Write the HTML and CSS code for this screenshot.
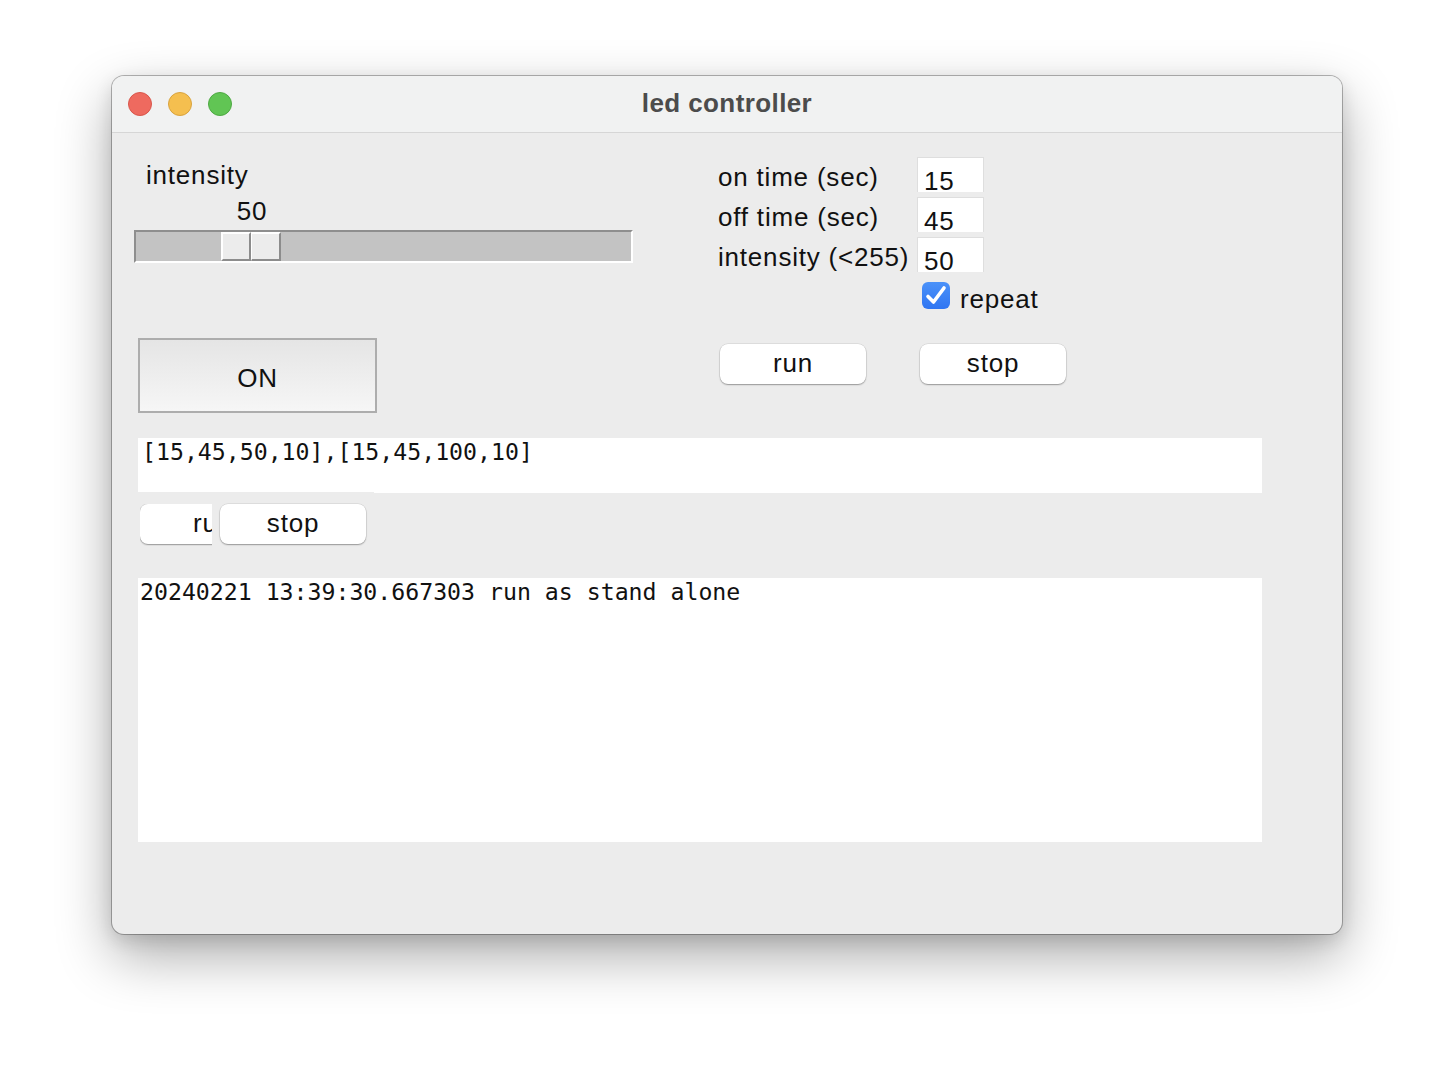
FILE: index.html
```html
<!DOCTYPE html>
<html>
<head>
<meta charset="utf-8">
<title>led controller</title>
<link rel="stylesheet" href="styles.css">
</head>
<body>
<div class="page">
  <div class="window">
    <div class="titlebar">
      <div class="lights">
        <span class="light red"></span>
        <span class="light yellow"></span>
        <span class="light green"></span>
      </div>
      <div class="title">led controller</div>
    </div>
    <div class="content">
      <div class="top">
        <div class="left">
          <div class="lbl-intensity">intensity</div>
          <div class="slider-val">50</div>
          <div class="slider">
            <div class="thumb">
              <span class="thumb-seg"></span>
              <span class="thumb-seg"></span>
            </div>
          </div>
          <div class="on-btn">ON</div>
        </div>
        <div class="right">
          <div class="form">
            <div class="flabel">on time (sec)</div>
            <div class="finput">15</div>
            <div class="flabel">off time (sec)</div>
            <div class="finput">45</div>
            <div class="flabel">intensity (&lt;255)</div>
            <div class="finput">50</div>
          </div>
          <div class="check-row">
            <span class="checkbox">
              <svg width="28" height="27" viewBox="0 0 28 27"><path d="M6 14.5 L11.5 20 L22 6" fill="none" stroke="#fff" stroke-width="3.6" stroke-linecap="round" stroke-linejoin="round"/></svg>
            </span>
            <span class="check-label">repeat</span>
          </div>
          <div class="btn-row">
            <div class="mac-btn first">run</div>
            <div class="mac-btn second">stop</div>
          </div>
        </div>
      </div>
      <div class="entry">[15,45,50,10],[15,45,100,10]</div>
      <div class="btn-row2">
        <div class="clip"><div class="mac-btn">run</div></div>
        <div class="mac-btn stop2">stop</div>
      </div>
      <div class="log">20240221 13:39:30.667303 run as stand alone</div>
    </div>
  </div>
</div>
</body>
</html>
```

FILE: styles.css
```css
* { box-sizing: border-box; }
html, body { margin: 0; padding: 0; background: #ffffff; }
body {
  font-family: "Liberation Sans", Arial, sans-serif;
  color: #111;
}
.page {
  padding: 76px 0 0 112px;
  height: 1082px;
}
.window {
  width: 1230px;
  height: 858px;
  border-radius: 12px;
  background: #ececec;
  overflow: hidden;
  box-shadow: 0 0 0 1px rgba(0,0,0,0.28), 0 22px 55px rgba(0,0,0,0.33), 0 6px 18px rgba(0,0,0,0.12);
}
.titlebar {
  height: 57px;
  background: #f1f2f2;
  border-bottom: 1px solid #d6d6d6;
  display: flex;
  align-items: center;
  position: relative;
}
.lights {
  display: flex;
  gap: 16px;
  padding-left: 16px;
}
.light {
  width: 24px;
  height: 24px;
  border-radius: 50%;
  display: block;
}
.red { background: #ee6a5f; border: 1px solid #d9564b; }
.yellow { background: #f5bf4f; border: 1px solid #d9a33e; }
.green { background: #61c554; border: 1px solid #4ea943; }
.title {
  position: absolute;
  left: 0; right: 0; top: 0;
  height: 56px;
  line-height: 55px;
  text-align: center;
  font-weight: bold;
  font-size: 26px;
  color: #4c4c4c;
  letter-spacing: 0.4px;
}
.content {
  font-size: 26px;
  letter-spacing: 0.8px;
}
.top {
  display: flex;
  height: 280px;
}
.left { width: 606px; }
.lbl-intensity {
  margin: 28px 0 0 34px;
  height: 28px;
  line-height: 28px;
}
.slider-val {
  margin: 8px 0 0 110px;
  width: 60px;
  height: 28px;
  line-height: 28px;
  text-align: center;
}
.slider {
  margin: 5px 0 0 22px;
  width: 499px;
  height: 33px;
  background: #c3c3c3;
  border-top: 2px solid #8e8e8e;
  border-left: 2px solid #8e8e8e;
  border-bottom: 2px solid #ffffff;
  border-right: 2px solid #ffffff;
}
.thumb {
  margin-left: 85px;
  display: flex;
  height: 29px;
}
.thumb-seg {
  width: 30px;
  height: 29px;
  background: #ececec;
  border-top: 2px solid #ffffff;
  border-left: 2px solid #ffffff;
  border-bottom: 2px solid #8c8c8c;
  border-right: 2px solid #8c8c8c;
  display: block;
}
.thumb-seg + .thumb-seg { border-left-width: 1px; }
.on-btn {
  margin: 75px 0 0 26px;
  width: 239px;
  height: 75px;
  border: 2px solid #adadad;
  background: linear-gradient(#e5e5e5, #f6f6f6);
  text-align: center;
  line-height: 71px;
  padding-top: 3px;
}
.right { flex: 1; }
.form {
  margin-top: 24px;
  display: grid;
  grid-template-columns: 199px 67px;
  grid-auto-rows: 35px;
  row-gap: 5px;
}
.flabel {
  line-height: 28px;
  padding-top: 6px;
  white-space: nowrap;
}
.finput {
  background: #ffffff;
  border: 1px solid #dedede;
  border-bottom: none;
  line-height: 20px;
  padding: 13px 0 0 6px;
}
.check-row {
  margin: 10px 0 0 204px;
  display: flex;
  align-items: flex-start;
  height: 27px;
}
.checkbox {
  width: 28px;
  height: 27px;
  border-radius: 6px;
  background: linear-gradient(#4b92f9, #2f75f2);
  display: block;
}
.checkbox svg { display: block; }
.check-label {
  margin-left: 10px;
  line-height: 28px;
  margin-top: 3px;
}
.btn-row {
  margin: 35px 0 0 2px;
  display: flex;
  gap: 54px;
}
.mac-btn {
  width: 146px;
  height: 40px;
  background: #ffffff;
  border-radius: 8px;
  box-shadow: 0 1px 1.5px rgba(0,0,0,0.32), 0 0 0 0.5px rgba(0,0,0,0.12);
  text-align: center;
  line-height: 38px;
}
.entry {
  margin: 25px 0 0 26px;
  width: 1124px;
  height: 55px;
  background: #ffffff;
  font-family: "DejaVu Sans Mono", "Liberation Mono", monospace;
  font-size: 23.2px;
  letter-spacing: 0;
  padding: 0 0 0 4px;
  position: relative;
}
.entry::after {
  content: "";
  position: absolute;
  left: 0;
  bottom: 0;
  width: 236px;
  height: 1.5px;
  background: #ececec;
}
.btn-row2 {
  margin: 11px 0 0 28px;
  display: flex;
  height: 40px;
}
.clip {
  width: 72px;
  height: 42px;
  overflow: hidden;
}
.stop2 { margin-left: 8px; }
.log {
  margin: 34px 0 0 26px;
  width: 1124px;
  height: 264px;
  background: #ffffff;
  font-family: "DejaVu Sans Mono", "Liberation Mono", monospace;
  font-size: 23.2px;
  letter-spacing: 0;
  padding: 0 0 0 2px;
}
```
